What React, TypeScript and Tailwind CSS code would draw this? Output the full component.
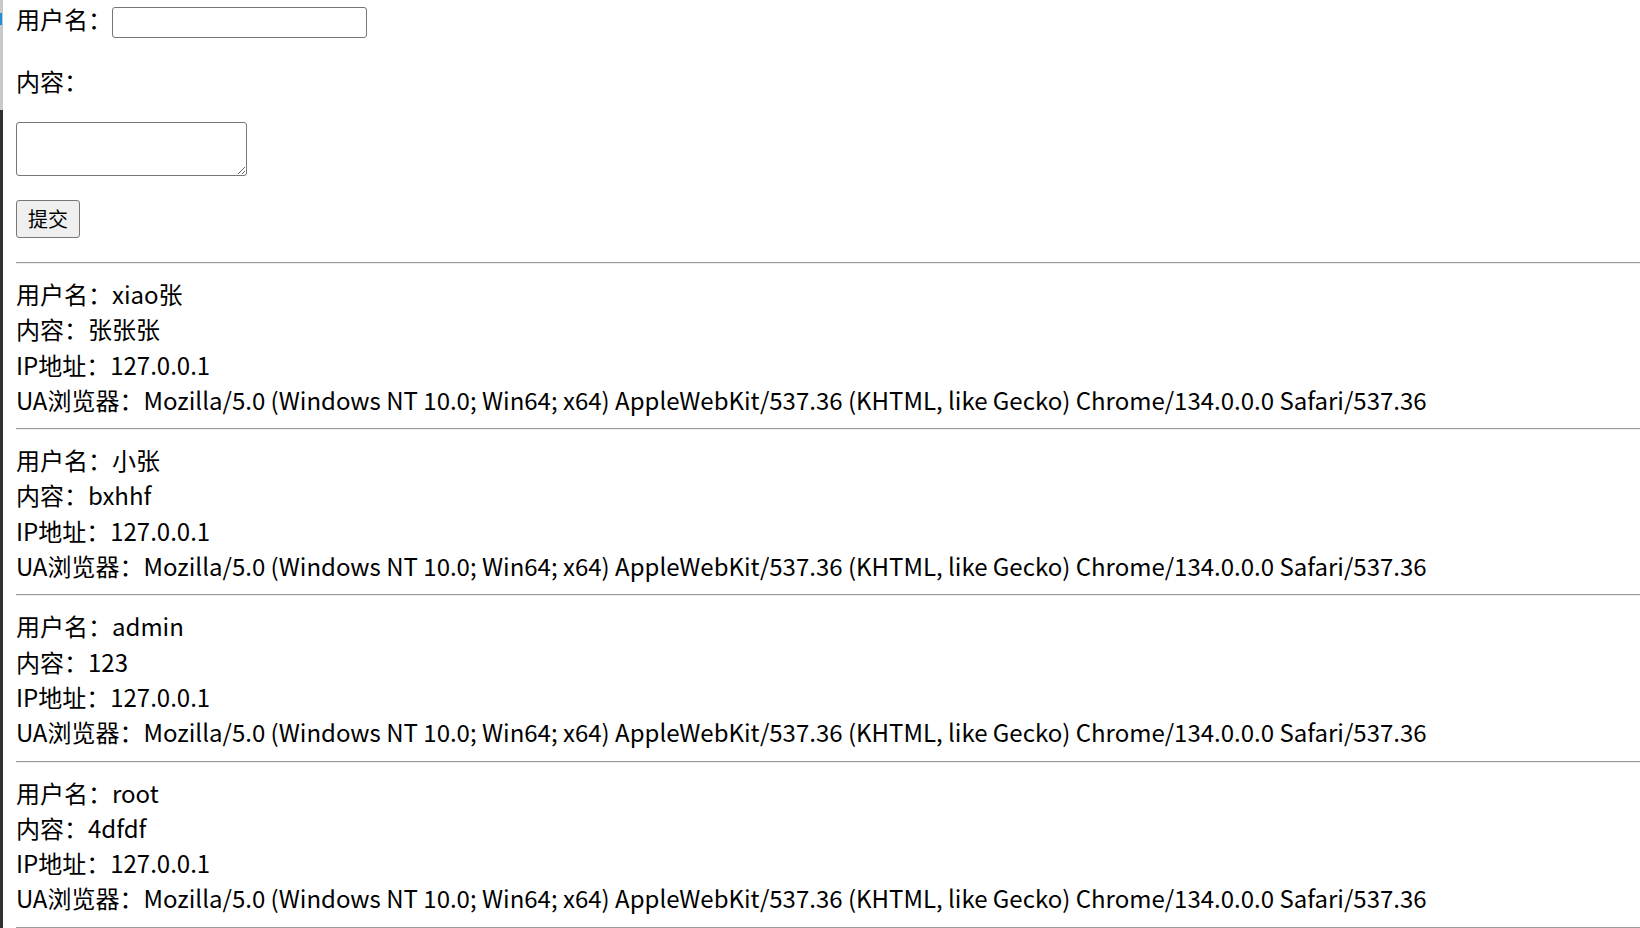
import React from "react";

const UA =
  "Mozilla/5.0 (Windows NT 10.0; Win64; x64) AppleWebKit/537.36 (KHTML, like Gecko) Chrome/134.0.0.0 Safari/537.36";

// messages as shown in the list
const messages = [
  { user: "xiao张", content: "张张张", ip: "127.0.0.1" },
  { user: "小张", content: "bxhhf", ip: "127.0.0.1" },
  { user: "admin", content: "123", ip: "127.0.0.1" },
  { user: "root", content: "4dfdf", ip: "127.0.0.1" },
];

function Rule({ first }: { first?: boolean }) {
  return (
    <hr
      className={`h-0 border-0 border-t border-b border-t-[#9a9a9a] border-b-[#eeeeee] mb-[12px] ${
        first ? "mt-[24px]" : "mt-[11px]"
      }`}
    />
  );
}

export default function App() {
  return (
    <div
      className="flex h-[928px] w-[1640px] overflow-hidden bg-white text-black"
      style={{ fontFamily: '"Noto Sans CJK SC", "Noto Sans", sans-serif' }}
    >
      {/* sliver of the window behind */}
      <div className="relative flex w-[3px] shrink-0 flex-col">
        <div className="h-[110px] bg-[#c9c9c9]" />
        <div className="flex-1 bg-[#2e3031]" />
        <div className="absolute left-0 top-[13px] h-[12px] w-[2px] bg-[#1e90d8]" />
      </div>

      <div className="min-w-0 flex-1 pl-[13px] pt-[1px] text-[24px] leading-[35px]">
        {/* form */}
        <div className="flex items-start">
          <span>用户名：</span>
          <input
            type="text"
            className="mt-[6px] h-[31px] w-[255px] rounded-[3px] border border-[#767676] bg-white px-1 outline-none"
          />
        </div>
        <div className="mt-[25px]">内容：</div>
        <textarea className="mt-[24px] block h-[54px] w-[231px] rounded-[3px] border border-[#767676] bg-white" />
        <button
          type="button"
          className="mt-[24px] block h-[38px] w-[64px] rounded-[3px] border border-[#767676] bg-[#efefef] text-[20px] leading-none"
        >
          提交
        </button>

        <Rule first />
        {messages.map((m, i) => (
          <div key={i} className="leading-[35.3px]">
            <div>用户名：{m.user}</div>
            <div>内容：{m.content}</div>
            <div>IP地址：{m.ip}</div>
            <div className="whitespace-nowrap">UA浏览器：{UA}</div>
            <Rule />
          </div>
        ))}
      </div>
    </div>
  );
}
